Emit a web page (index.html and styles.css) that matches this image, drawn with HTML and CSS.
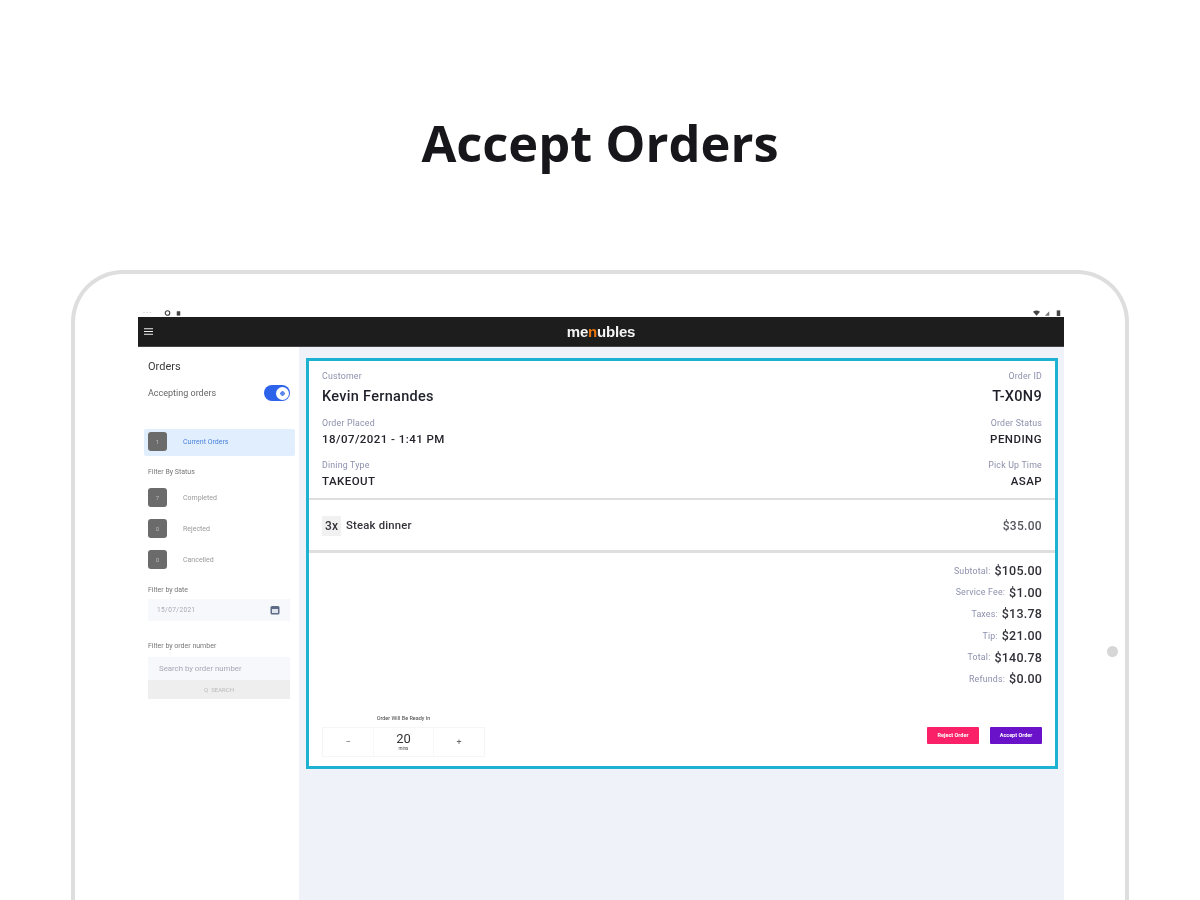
FILE: index.html
```html
<!DOCTYPE html>
<html lang="en">
<head>
<meta charset="utf-8">
<title>Accept Orders</title>
<link rel="stylesheet" href="styles.css">
</head>
<body>
<h1 class="title">Accept Orders</h1>
<div class="device">
  <span class="home-dot"></span>
  <div class="status">
    <div class="status-group">
      <span class="tiny-dots">···</span>
      <svg class="st-ico" viewBox="0 0 8 8"><circle cx="4" cy="4" r="2.6" fill="none" stroke="#444" stroke-width="1.3"/></svg>
      <svg class="st-ico" viewBox="0 0 8 8"><rect x="2" y="2" width="4" height="5" fill="#444"/></svg>
    </div>
    <div class="status-group">
      <svg class="st-ico" viewBox="0 0 8 8"><path d="M0 2.5 Q4 0 8 2.5 L4 7Z" fill="#444"/></svg>
      <svg class="st-ico" viewBox="0 0 8 8"><path d="M1 7 L6 2 V7Z" fill="#777"/></svg>
      <svg class="st-ico" viewBox="0 0 8 8"><rect x="2" y="1" width="4" height="6.5" fill="#444"/></svg>
    </div>
  </div>
  <header class="appbar">
    <svg class="menu" viewBox="0 0 9 7"><path d="M0 .7H9M0 3.5H9M0 6.3H9" stroke="#eee" stroke-width="1.1"/></svg>
    <div class="logo">me<span class="logo-n">n</span>ubles</div>
    <span class="appbar-spacer"></span>
  </header>
  <div class="app">
    <aside class="side">
      <div class="side-title">Orders</div>
      <div class="accepting">
        <span>Accepting orders</span>
        <span class="toggle"><span class="knob"></span></span>
      </div>
      <div class="nav nav-active"><span class="badge">1</span><span class="nav-text">Current Orders</span></div>
      <div class="side-label label-status">Filter By Status</div>
      <div class="nav"><span class="badge">7</span><span class="nav-text muted">Completed</span></div>
      <div class="nav"><span class="badge">0</span><span class="nav-text muted">Rejected</span></div>
      <div class="nav"><span class="badge">0</span><span class="nav-text muted">Cancelled</span></div>
      <div class="side-label label-date">Filter by date</div>
      <div class="date-input">
        <span>15/07/2021</span>
        <svg class="cal" viewBox="0 0 10 10"><rect x=".5" y="1" width="9" height="8.5" rx="1.5" fill="#5d6b85"/><rect x="2" y="4" width="6" height="4" fill="#dfe5ee"/></svg>
      </div>
      <div class="side-label label-number">Filter by order number</div>
      <div class="search-input">Search by order number</div>
      <div class="search-btn">Q&nbsp;&nbsp;SEARCH</div>
    </aside>
    <main class="main">
      <section class="card">
        <div class="info">
          <div class="info-row first">
            <div><div class="lbl">Customer</div><div class="val big">Kevin Fernandes</div></div>
            <div class="right"><div class="lbl">Order ID</div><div class="val big">T-X0N9</div></div>
          </div>
          <div class="info-row second">
            <div><div class="lbl">Order Placed</div><div class="val">18/07/2021 - 1:41 PM</div></div>
            <div class="right"><div class="lbl">Order Status</div><div class="val">PENDING</div></div>
          </div>
          <div class="info-row third">
            <div><div class="lbl">Dining Type</div><div class="val">TAKEOUT</div></div>
            <div class="right"><div class="lbl">Pick Up Time</div><div class="val">ASAP</div></div>
          </div>
        </div>
        <div class="item">
          <span class="qty">3x</span>
          <span class="item-name">Steak dinner</span>
          <span class="item-price">$35.00</span>
        </div>
        <div class="summary">
          <div class="totals">
            <div class="total"><span class="lbl">Subtotal:</span><span class="amt">$105.00</span></div>
            <div class="total"><span class="lbl">Service Fee:</span><span class="amt">$1.00</span></div>
            <div class="total"><span class="lbl">Taxes:</span><span class="amt">$13.78</span></div>
            <div class="total"><span class="lbl">Tip:</span><span class="amt">$21.00</span></div>
            <div class="total"><span class="lbl">Total:</span><span class="amt">$140.78</span></div>
            <div class="total"><span class="lbl">Refunds:</span><span class="amt">$0.00</span></div>
          </div>
          <div class="actions">
            <div class="ready">
              <div class="ready-label">Order Will Be Ready In</div>
              <div class="stepper">
                <span class="step">−</span>
                <span class="step-mid"><span class="step-num">20</span><span class="step-unit">mins</span></span>
                <span class="step">+</span>
              </div>
            </div>
            <div class="buttons">
              <span class="btn btn-reject">Reject Order</span>
              <span class="btn btn-accept">Accept Order</span>
            </div>
          </div>
        </div>
      </section>
    </main>
  </div>
</div>
</body>
</html>
```
FILE: styles.css
```css
* { box-sizing: border-box; }
html, body { margin: 0; height: 900px; overflow: hidden; background: #fff; }
body { font-family: Roboto, "Liberation Sans", sans-serif; color: #1c1c24; }

.title {
  margin: 0;
  padding-top: 109px;
  height: 270px;
  text-align: center;
  font: 700 50.6px/68px "Open Sans", sans-serif;
  color: #17171b;
  filter: blur(.4px);
}

.device {
  position: relative;
  margin: 0 71px 0 71px;
  height: 630px;
  padding: 34px 61px 0 63px;
  border: 4px solid #dedede;
  border-bottom: 0;
  border-radius: 52px 52px 0 0;
  overflow: hidden;
}
.home-dot {
  position: absolute;
  left: 1032px;
  top: 372px;
  width: 11px;
  height: 11px;
  border-radius: 50%;
  background: #d6d6d6;
}

.status { height: 9px; display: flex; justify-content: space-between; padding: 0 2px 0 5px; filter: blur(.6px); }
.status-group { display: flex; align-items: center; gap: 4px; }
.tiny-dots { font-size: 8px; line-height: 9px; color: #999; width: 17px; letter-spacing: 1px; }
.st-ico { width: 7px; height: 8px; }

.appbar {
  height: 30px;
  background: #1d1d1d;
  display: flex;
  align-items: center;
  justify-content: space-between;
  padding: 0 6px;
  border-bottom: 1px solid #444;
  filter: blur(.4px);
}
.menu { width: 9px; height: 7px; }
.appbar-spacer { width: 9px; }
.logo { font: 700 15px/20px "Liberation Sans", sans-serif; color: #f4f4f4; letter-spacing: -.2px; }
.logo-n { color: #e8750c; }

.app { display: flex; height: 600px; filter: blur(.6px); }

.side { width: 161px; background: #fff; padding: 13px 4px 0 6px; flex: none; }
.side-title { margin-left: 4px; font-size: 11px; line-height: 14px; color: #3a3a3a; }
.accepting {
  margin: 11px 5px 0 4px;
  height: 16px;
  display: flex;
  align-items: center;
  justify-content: space-between;
  font-size: 9px;
  color: #666;
}
.toggle {
  width: 26px;
  height: 16px;
  border-radius: 8px;
  background: #2d62ea;
  display: flex;
  justify-content: flex-end;
  align-items: center;
  padding-right: 1px;
}
.knob {
  width: 13px;
  height: 13px;
  border-radius: 50%;
  background: radial-gradient(circle, #5a86ee 0 2px, #fff 2.5px);
}
.nav {
  height: 27px;
  margin-top: 4px;
  padding: 0 0 2px 4px;
  display: flex;
  align-items: center;
  font-size: 7px;
}
.nav-active { margin-top: 28px; background: #e0eefd; border-radius: 2px; color: #4c83dc; }
.badge {
  width: 19px;
  height: 19px;
  border-radius: 3px;
  background: #6b6b6b;
  color: #bbb;
  font-size: 6px;
  display: flex;
  align-items: center;
  justify-content: center;
}
.nav-text { margin-left: 16px; }
.muted { color: #9a9a9a; }
.side-label { margin-left: 4px; font-size: 7px; line-height: 10px; color: #777; }
.label-status { margin-top: 11px; margin-bottom: 8px; }
.label-date { margin-top: 11px; }
.label-number { margin-top: 20px; }
.date-input {
  margin: 4px 5px 0 4px;
  height: 22px;
  padding: 0 10px 0 9px;
  background: #f6f8fc;
  display: flex;
  align-items: center;
  justify-content: space-between;
  font-size: 6.5px;
  color: #a5a9b2;
  letter-spacing: .4px;
}
.cal { width: 10px; height: 10px; }
.search-input {
  margin: 6px 5px 0 4px;
  height: 23px;
  padding-left: 11px;
  background: #f7f8fc;
  font-size: 7.8px;
  line-height: 23px;
  color: #a5a9b6;
}
.search-btn {
  margin: 0 5px 0 4px;
  height: 19px;
  background: #eeeeee;
  font-size: 6px;
  line-height: 19px;
  text-align: center;
  color: #b9b9b9;
}

.main { flex: 1; background: #f0f2fa; padding: 11px 6px 0 7px; }
.card {
  height: 411px;
  background: #fff;
  border: 3px solid #1db2d2;
  display: flex;
  flex-direction: column;
}
.info { height: 137px; padding: 0 13px; flex: none; }
.info-row { display: flex; justify-content: space-between; }
.first { padding-top: 10px; }
.second { padding-top: 12px; }
.third { padding-top: 14px; }
.right { text-align: right; }
.lbl { font-size: 8.8px; line-height: 10px; color: #8c90ac; letter-spacing: .2px; }
.val { margin-top: 4px; font-size: 11.5px; font-weight: 500; line-height: 14px; letter-spacing: .45px; color: #24242c; }
.val.big { margin-top: 7px; font-size: 14.5px; line-height: 18px; letter-spacing: .3px; color: #1f1f2a; }

.item {
  height: 55px;
  flex: none;
  border-top: 2px solid #dedede;
  border-bottom: 3px solid #dedede;
  padding: 1px 13px 0;
  display: flex;
  align-items: center;
  font-size: 11.3px;
  font-weight: 500;
  color: #33333b;
}
.qty {
  width: 19px;
  height: 20px;
  margin-right: 5px;
  background: #f1f1f1;
  text-align: center;
  line-height: 20px;
  font-size: 12px;
}
.item-name { flex: 1; letter-spacing: .2px; }
.item-price { color: #55555c; font-size: 12px; letter-spacing: .3px; }

.summary { flex: 1; padding: 9px 13px 0; display: flex; flex-direction: column; }
.totals { display: flex; flex-direction: column; align-items: flex-end; gap: 4.7px; }
.total { display: flex; align-items: center; gap: 4px; height: 17px; }
.amt { font-size: 12.5px; font-weight: 500; letter-spacing: .2px; color: #303038; }
.actions { margin-top: 27px; display: flex; justify-content: space-between; align-items: flex-end; }
.ready-label { font-size: 5.5px; line-height: 8px; text-align: center; color: #444; margin-bottom: 5px; }
.stepper {
  width: 163px;
  height: 30px;
  border: 1px solid #f5f5f5;
  display: flex;
  align-items: center;
  color: #666;
}
.step { width: 50px; text-align: center; font-size: 9px; }
.step-mid {
  flex: 1;
  height: 100%;
  display: flex;
  flex-direction: column;
  align-items: center;
  justify-content: center;
  border: 1px solid #f7f7f7;
  border-width: 0 1px;
}
.step-num { font-size: 13px; line-height: 14px; color: #333; }
.step-unit { font-size: 4.5px; line-height: 6px; color: #444; }
.buttons { display: flex; gap: 11px; padding-bottom: 13px; }
.btn {
  width: 52px;
  height: 17px;
  border-radius: 1px;
  color: #fff;
  font-size: 5.5px;
  font-weight: 700;
  line-height: 17px;
  text-align: center;
}
.btn-reject { background: #fb2168; }
.btn-accept { background: #6a12c9; }
```
